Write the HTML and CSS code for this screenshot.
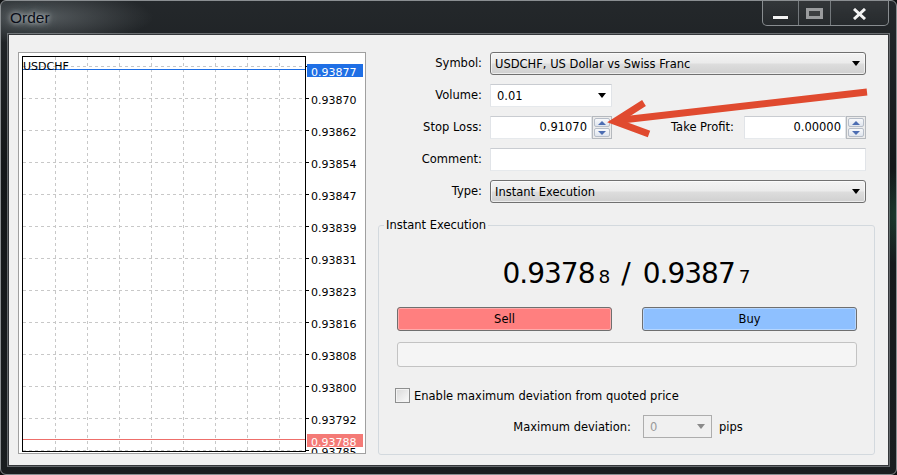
FILE: index.html
```html
<!DOCTYPE html>
<html>
<head>
<meta charset="utf-8">
<title>Order</title>
<link rel="stylesheet" href="styles.css">
</head>
<body>
<div class="window">
  <div class="titlebar">
    <span class="title">Order</span>
    <div class="caption">
      <div class="cbtn cmin"><span class="min-bar"></span></div>
      <div class="cbtn cmax"><span class="max-box"></span></div>
      <div class="cbtn cclose">
        <svg class="x-icon" width="15" height="12" viewBox="0 0 15 12"><path d="M2 1 L13 11 M13 1 L2 11" stroke="#f4f4f4" stroke-width="3" fill="none"/></svg>
      </div>
    </div>
  </div>

  <div class="client">
    <div class="chart-panel">
      <svg class="chart" width="346" height="400" viewBox="0 0 346 400">
        <g class="grid">
          <path d="M36.5 4V398M68.5 4V398M100.5 4V398M132.5 4V398M164.5 4V398M196.5 4V398M228.5 4V398M260.5 4V398"/>
          <path d="M4 13.5H286M4 45.5H286M4 77.5H286M4 109.5H286M4 141.5H286M4 173.5H286M4 205.5H286M4 237.5H286M4 269.5H286M4 301.5H286M4 333.5H286M4 365.5H286M4 397.5H286"/>
        </g>
        <path class="ticks" d="M287 13.5H290M287 45.5H290M287 77.5H290M287 109.5H290M287 141.5H290M287 173.5H290M287 205.5H290M287 237.5H290M287 269.5H290M287 301.5H290M287 333.5H290M287 365.5H290M287 397.5H290"/>
        <path class="ask-line" d="M4 16.5H286"/>
        <path class="bid-line" d="M4 386.5H286"/>
        <rect class="frame" x="3.5" y="3.5" width="283" height="395"/>
        <text class="sym" x="4" y="16.5">USDCHF</text>
        <g class="axis">
          <text x="292" y="51.3">0.93870</text>
          <text x="292" y="83.3">0.93862</text>
          <text x="292" y="115.3">0.93854</text>
          <text x="292" y="147.3">0.93847</text>
          <text x="292" y="179.3">0.93839</text>
          <text x="292" y="211.3">0.93831</text>
          <text x="292" y="243.3">0.93823</text>
          <text x="292" y="275.3">0.93816</text>
          <text x="292" y="307.3">0.93808</text>
          <text x="292" y="339.3">0.93800</text>
          <text x="292" y="371.3">0.93792</text>
          <text x="292" y="403.3">0.93785</text>
        </g>
        <rect class="ask-tag" x="288" y="11" width="56" height="13"/>
        <text class="tag-text" x="292" y="22.5">0.93877</text>
        <rect class="bid-tag" x="288" y="381" width="56" height="13"/>
        <text class="tag-text" x="292" y="392.5">0.93788</text>
      </svg>
    </div>

    <div class="order-form">
      <div class="rows">
        <div class="row">
          <span class="lbl">Symbol:</span>
          <div class="combo combo-gray full">USDCHF, US Dollar vs Swiss Franc<i class="arrow"></i></div>
        </div>
        <div class="row">
          <span class="lbl">Volume:</span>
          <div class="combo combo-white small">0.01<i class="arrow"></i></div>
        </div>
        <div class="row">
          <span class="lbl">Stop Loss:</span>
          <div class="field num">0.91070</div>
          <div class="spin"><span class="up"></span><span class="down"></span></div>
          <span class="lbl2">Take Profit:</span>
          <div class="field num">0.00000</div>
          <div class="spin"><span class="up"></span><span class="down"></span></div>
        </div>
        <div class="row">
          <span class="lbl">Comment:</span>
          <div class="field full"></div>
        </div>
        <div class="row">
          <span class="lbl">Type:</span>
          <div class="combo combo-gray full">Instant Execution<i class="arrow"></i></div>
        </div>
      </div>

      <fieldset class="group">
        <legend>Instant Execution</legend>
        <div class="quote"><span>0.9378</span><small>8</small><span class="sep">/</span><span>0.9387</span><small>7</small></div>
        <div class="trade">
          <div class="btn sell">Sell</div>
          <div class="btn buy">Buy</div>
        </div>
        <div class="bar"></div>
        <div class="check-row"><span class="checkbox"></span><span>Enable maximum deviation from quoted price</span></div>
        <div class="dev-row">
          <span class="dev-lbl">Maximum deviation:</span>
          <div class="combo combo-dis">0<i class="arrow"></i></div>
          <span class="pips">pips</span>
        </div>
      </fieldset>
    </div>
  </div>

  <svg class="annot" width="897" height="475" viewBox="0 0 897 475">
    <path d="M867 92 L622 120" stroke="#e04a2f" stroke-width="7" fill="none"/>
    <path d="M644 103 L615 121.5 L649 134" stroke="#e04a2f" stroke-width="7" fill="none" stroke-linejoin="miter"/>
  </svg>
</div>
</body>
</html>
```

FILE: styles.css
```css
* { box-sizing: border-box; }
html, body { margin: 0; padding: 0; }
body {
  width: 897px;
  height: 475px;
  overflow: hidden;
  background: #101213;
  font-family: "DejaVu Sans", sans-serif;
  font-size: 11.5px;
  color: #000;
}

.window {
  position: relative;
  width: 897px;
  height: 475px;
  border: 1px solid #8a8e91;
  border-radius: 6px;
  overflow: hidden;
  display: flex;
  flex-direction: column;
  background:
    radial-gradient(ellipse 150px 36px at 40px 16px, rgba(125,132,136,.55), rgba(0,0,0,0) 75%),
    radial-gradient(ellipse 30px 60px at 896px 215px, rgba(40,120,80,.35), rgba(0,0,0,0) 80%),
    linear-gradient(180deg, #24282b 0%, #141719 35%, #1a1e20 100%);
}

/* title bar */
.titlebar {
  flex: none;
  height: 33px;
  display: flex;
  align-items: flex-start;
  justify-content: space-between;
  padding: 0 7px 0 9px;
}
.title {
  font-family: "Liberation Sans", Arial, sans-serif;
  font-size: 15.5px;
  line-height: 18px;
  margin-top: 8px;
  color: #0a0e18;
  text-shadow: 0 0 5px rgba(230,236,240,.9), 0 0 11px rgba(230,236,240,.55);
}
.caption {
  display: flex;
  margin-top: -1px;
  height: 26px;
  border: 1px solid rgba(205,210,214,.6);
  border-top: none;
  border-radius: 0 0 5px 5px;
  overflow: hidden;
}
.cbtn {
  display: flex;
  justify-content: center;
  align-items: flex-start;
  height: 100%;
  background: linear-gradient(180deg, rgba(255,255,255,.07), rgba(255,255,255,.02));
}
.cbtn + .cbtn { border-left: 1px solid rgba(205,210,214,.45); }
.cmin { width: 35px; }
.cmax { width: 32px; }
.cclose { width: 58px; }
.min-bar {
  margin-top: 16px;
  width: 15px;
  height: 3px;
  background: #f2f2f2;
  box-shadow: 0 0 1px #000;
}
.max-box {
  margin-top: 8px;
  width: 17px;
  height: 11px;
  border: 3px solid #9a9c9e;
  background: #3c3f41;
}
.x-icon { margin-top: 8px; display: block; }

/* client area */
.client {
  flex: none;
  margin: 0 7px;
  height: 432px;
  background: #f0f0f0;
  border: 1px solid #34373a;
  box-shadow: 0 0 0 1px rgba(190,196,200,.45);
  display: flex;
  align-items: flex-start;
  gap: 12px;
  padding: 17px 13px 0 9px;
}

/* chart */
.chart-panel {
  flex: none;
  width: 348px;
  height: 402px;
  border: 1px solid #a0a0a0;
  background: #fff;
  overflow: hidden;
}
.chart { display: block; font-family: "DejaVu Sans", sans-serif; font-size: 11px; }
.grid path { stroke: #c8c8c8; stroke-width: 1; stroke-dasharray: 3 3; fill: none; }
.ticks { stroke: #000; stroke-width: 1; fill: none; }
.frame { fill: none; stroke: #000; stroke-width: 1; }
.ask-line { stroke: #1f6fe5; stroke-width: 1; }
.bid-line { stroke: #ee6f6b; stroke-width: 1; }
.ask-tag { fill: #1f6fe5; }
.bid-tag { fill: #f47a76; }
.sym { fill: #000; font-size: 11px; }
.axis text { fill: #000; }
.tag-text { fill: #fff; }

/* form */
.order-form {
  flex: none;
  width: 497px;
  display: flex;
  flex-direction: column;
}
.rows { display: flex; flex-direction: column; gap: 9px; }
.row { display: flex; align-items: center; height: 23px; }
.lbl {
  flex: none;
  width: 104px;
  margin-right: 8px;
  text-align: right;
  line-height: 23px;
}
.lbl2 {
  flex: none;
  width: 132px;
  padding-right: 10px;
  text-align: right;
  line-height: 23px;
}
.combo {
  height: 23px;
  display: flex;
  align-items: center;
  padding-left: 4px;
  white-space: nowrap;
}
.arrow {
  margin-left: auto;
  margin-right: 5px;
  width: 0;
  height: 0;
  border-left: 4.5px solid transparent;
  border-right: 4.5px solid transparent;
  border-top: 5px solid #000;
}
.full { width: 376px; }
.small { width: 122px; }
.combo-gray {
  border: 1px solid #707070;
  border-radius: 3px;
  background: linear-gradient(180deg, #f3f3f3 0%, #ebebeb 48%, #dddddd 52%, #d0d0d0 100%);
  box-shadow: inset 0 0 0 1px rgba(255,255,255,.6);
}
.combo-white {
  background: #fff;
  border: 1px solid;
  border-color: #c9ccd1 #e1e4e8 #e6e9ec #e1e4e8;
  padding-left: 6px;
}
.field {
  height: 23px;
  background: #fff;
  border: 1px solid;
  border-color: #c9ccd1 #e1e4e8 #e6e9ec #e1e4e8;
}
.num {
  width: 102px;
  text-align: right;
  padding-right: 4px;
  line-height: 21px;
}
.spin {
  flex: none;
  width: 20px;
  height: 23px;
  border: 1px solid #b5b9be;
  background: #ececec;
  padding: 1px;
  display: flex;
  flex-direction: column;
  gap: 1px;
}
.spin span {
  flex: 1;
  border: 1px solid #b6bdc8;
  border-radius: 2px;
  background: linear-gradient(180deg, #f8f9fb, #dfe5ee);
  display: flex;
  align-items: center;
  justify-content: center;
}
.spin .up::after {
  content: "";
  border-left: 4px solid transparent;
  border-right: 4px solid transparent;
  border-bottom: 4px solid #4c6db2;
}
.spin .down::after {
  content: "";
  border-left: 4px solid transparent;
  border-right: 4px solid transparent;
  border-top: 4px solid #4c6db2;
}

/* group box */
.group {
  margin: 14px 0 0 0;
  padding: 0;
  min-inline-size: 0;
  width: 497px;
  height: 238px;
  border: 1px solid #d3d9de;
  border-radius: 3px;
}
.group legend {
  margin-left: 5px;
  padding: 0 2px;
  line-height: 16px;
  font-size: 11.5px;
}
.quote {
  margin-top: 24px;
  height: 33px;
  line-height: 33px;
  text-align: center;
  font-size: 28px;
  letter-spacing: -1px;
  white-space: nowrap;
}
.quote small {
  font-size: 18.5px;
  letter-spacing: 0;
  margin-left: 4px;
}
.quote .sep { margin: 0 12px 0 11px; letter-spacing: 0; }

.trade {
  display: flex;
  gap: 30px;
  padding: 0 17px 0 18px;
  margin-top: 17px;
}
.btn {
  flex: 1;
  height: 24px;
  border: 1px solid #6f6f6f;
  border-radius: 3px;
  display: flex;
  align-items: center;
  justify-content: center;
  box-shadow: inset 0 0 0 1px rgba(255,255,255,.35);
}
.sell { background: #ff7f7f; }
.buy { background: #8ec0ff; }
.bar {
  margin: 11px 17px 0 18px;
  height: 25px;
  border: 1px solid #c3c3c3;
  border-radius: 3px;
  background: #f5f5f5;
}
.check-row {
  display: flex;
  align-items: center;
  gap: 4px;
  margin: 21px 0 0 16px;
  height: 15px;
}
.checkbox {
  flex: none;
  width: 15px;
  height: 15px;
  border: 1px solid #8e8f8f;
  background: linear-gradient(135deg, #d8d8d8, #fbfbfb);
  box-shadow: inset 0 0 0 1px #f3f3f3;
}
.dev-row {
  display: flex;
  align-items: center;
  height: 23px;
  margin-top: 12px;
  padding-left: 52px;
}
.dev-lbl { width: 200px; text-align: right; margin-right: 12px; }
.combo-dis {
  width: 69px;
  border: 1px solid #adadad;
  background: #f0f0f0;
  color: #9a9a9a;
  padding-left: 6px;
  box-shadow: inset 2px 2px 0 #f0f0f0;
}
.combo-dis .arrow { border-top-color: #8a8a8a; margin-right: 6px; }
.pips { margin-left: 7px; }

.annot {
  position: absolute;
  left: -1px;
  top: -1px;
  pointer-events: none;
}
```
